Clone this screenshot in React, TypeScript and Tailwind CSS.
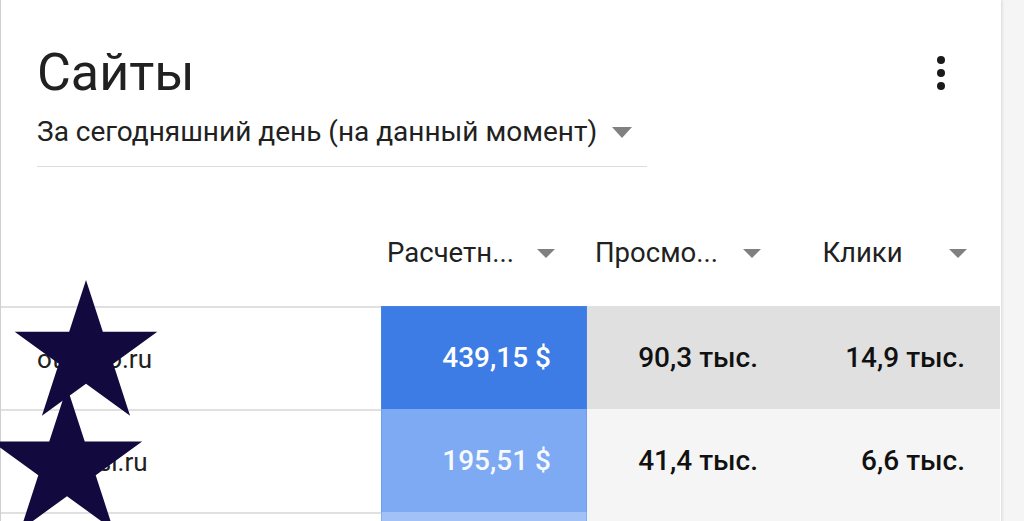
import React from "react";

const rows = [
  {
    site: "otvetyo.ru",
    revenue: "439,15 $",
    views: "90,3 тыс.",
    clicks: "14,9 тыс.",
    blue: "bg-[#3d7be5] border-t border-[#2f70e3]",
    rest: "bg-[#e0e0e0]",
    text: "text-white",
  },
  {
    site: "sportsi.ru",
    revenue: "195,51 $",
    views: "41,4 тыс.",
    clicks: "6,6 тыс.",
    blue: "bg-[#7eaaf3]",
    rest: "bg-[#f5f5f5]",
    text: "text-white/95",
  },
  {
    site: "",
    revenue: "",
    views: "",
    clicks: "",
    blue: "bg-[#a2c2f7]",
    rest: "bg-[#f5f5f5]",
    text: "text-white",
  },
];

function Caret({ className }: { className: string }) {
  return (
    <svg className={className} viewBox="0 0 20 10" preserveAspectRatio="none">
      <path d="M0 0h20L10 10z" fill="#808080" />
    </svg>
  );
}

function Star({ className }: { className: string }) {
  return (
    <svg className={className} viewBox="-100 -100 200 200">
      <polygon
        fill="#120a3e"
        points="0,-100 22.45,-30.9 95.1,-30.9 36.33,11.8 58.78,80.9 0,38.2 -58.78,80.9 -36.33,11.8 -95.1,-30.9 -22.45,-30.9"
      />
    </svg>
  );
}

export default function App() {
  return (
    <div className="min-h-screen bg-[#f5f5f5] font-['Roboto',sans-serif] text-[#212121] overflow-hidden">
      <div className="relative w-[1001px] bg-white border-l border-[#d0d0d0] shadow-[1px_0_3px_rgba(0,0,0,0.12)]">
        <div className="pl-[36px] pr-[56px] pt-[47px]">
          <div className="flex items-center justify-between">
            <h1 className="text-[52px] leading-[52px] font-normal">Сайты</h1>
            <div className="flex flex-col gap-[5px]">
              <span className="w-2 h-2 rounded-full bg-[#1a1a1a]" />
              <span className="w-2 h-2 rounded-full bg-[#1a1a1a]" />
              <span className="w-2 h-2 rounded-full bg-[#1a1a1a]" />
            </div>
          </div>
          <div className="mt-[19px] w-[610px] flex items-center justify-between pr-[15px] pb-[20px] border-b border-[#dcdcdc]">
            <span className="text-[28px] leading-[28px]">
              За сегодняшний день (на данный момент)
            </span>
            <Caret className="w-[20px] h-[11px]" />
          </div>
        </div>

        <div className="flex h-[139px] items-end pb-[40px] text-[27.5px] leading-[26px]">
          <div className="w-[380px]" />
          {["Расчетн...", "Просмо...", "Клики"].map((h) => (
            <div key={h} className="w-[206px] flex items-center pl-[5px] pr-[32px]">
              <span className="flex-1 text-center whitespace-nowrap">{h}</span>
              <Caret className="ml-[22px] w-[18px] h-[9px]" />
            </div>
          ))}
        </div>

        {rows.map((r, i) => (
          <div key={i} className="flex h-[103px] text-[28px] leading-[28px]">
            <div className="w-[380px] border-t-2 border-[#e0e0e0] flex items-center pl-[36px] text-[26px]">
              {r.site}
            </div>
            <div
              className={`w-[206px] flex items-center justify-end pr-[35px] font-medium border-x border-[#5b8ee8]/40 ${r.blue} ${r.text}`}
            >
              {r.revenue}
            </div>
            <div className={`w-[206px] flex items-center justify-end pr-[35px] font-medium text-[#111] ${r.rest}`}>
              {r.views}
            </div>
            <div className={`w-[207px] flex items-center justify-end pr-[35px] font-medium text-[#111] ${r.rest}`}>
              {r.clicks}
            </div>
          </div>
        ))}

        <Star className="absolute left-[10px] top-[280px] w-[150px] h-[150px]" />
        <Star className="absolute left-[-13px] top-[387px] w-[158px] h-[158px]" />
      </div>
    </div>
  );
}
